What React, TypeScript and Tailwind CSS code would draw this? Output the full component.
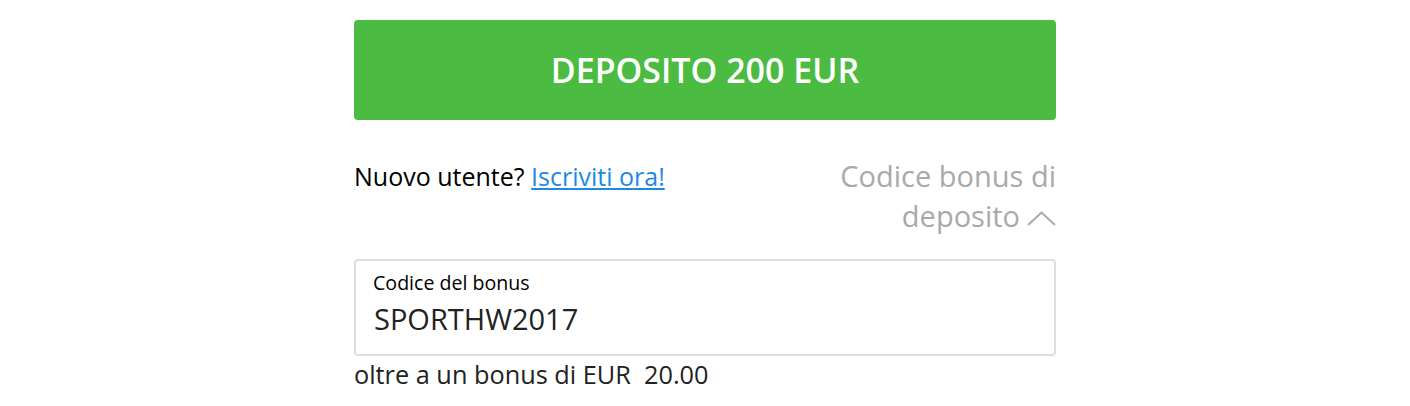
const App = () => {
  return (
    <div className="min-h-[406px] w-full bg-white font-['Open_Sans',sans-serif]">
      <div className="mx-auto w-[702px] pt-5">
        <button className="flex h-[100px] w-full items-center justify-center rounded bg-[#4bbc41] text-[34px] font-semibold text-white">
          DEPOSITO 200 EUR
        </button>

        <div className="mt-[36px] flex items-start justify-between">
          <p className="text-[25px] leading-[40px] text-black">
            Nuovo utente?{' '}
            <a href="#" className="text-[#1e88e5] underline">
              Iscriviti ora!
            </a>
          </p>
          <div className="w-[240px] text-right text-[29px] leading-[40px] text-[#a9a9a9]">
            Codice bonus di deposito
            <svg
              className="ml-[7px] inline-block align-[1px]"
              width="29"
              height="15"
              viewBox="0 0 29 15"
              fill="none"
              stroke="#a9a9a9"
              strokeWidth="2"
            >
              <path d="M1 14 L14.5 1.5 L28 14" />
            </svg>
          </div>
        </div>

        <div className="mt-[23px] rounded border-2 border-[#dedede] px-[17px] pt-[10px] pb-[18px]">
          <div className="text-[19.6px] leading-6 text-black">Codice del bonus</div>
          <div className="mt-[7px] pl-px text-[29px] leading-[34px] text-[#222]">SPORTHW2017</div>
        </div>

        <p className="mt-[2px] whitespace-pre text-[25.3px] leading-[32px] text-[#222]">
          oltre a un bonus di EUR  20.00
        </p>
      </div>
    </div>
  );
};

export default App;
